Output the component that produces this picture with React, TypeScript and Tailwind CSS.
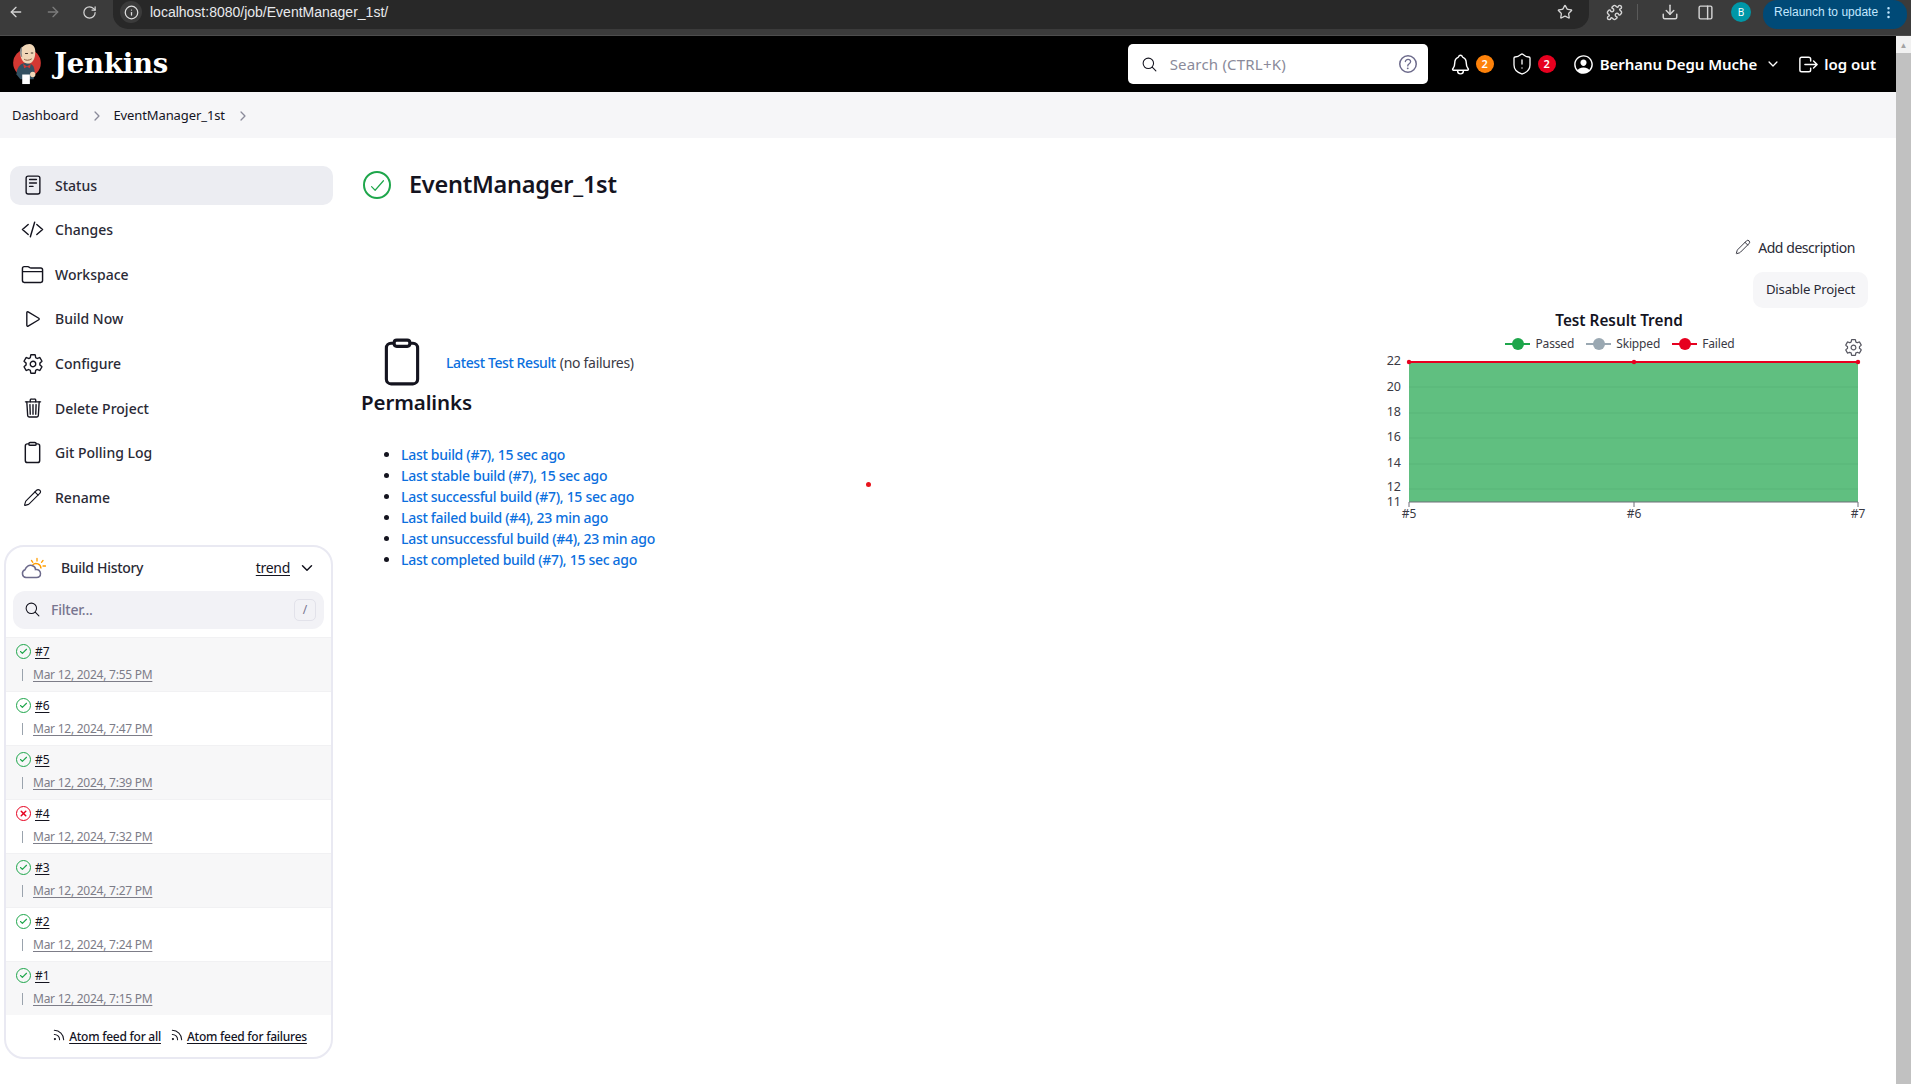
import React from "react";
import { ArrowLeft, ArrowRight, RotateCw, Info, Star, Puzzle, Download, PanelRight, EllipsisVertical, ShieldAlert, Check, X, Pencil, Rss } from "lucide-react";
import { IoReaderOutline, IoCodeSlashOutline, IoFolderOutline, IoPlayOutline, IoSettingsOutline, IoTrashOutline, IoClipboardOutline, IoSearchOutline, IoHelpCircleOutline, IoNotificationsOutline, IoPersonCircleOutline, IoLogOutOutline, IoChevronForward, IoChevronDown, IoCheckmark } from "react-icons/io5";

const F = "font-['Noto_Sans',sans-serif]";

function Logo() {
  return (
    <svg viewBox="0 0 30 44" className="w-[30px] h-[42px] shrink-0">
      <circle cx="15" cy="21" r="14.500" fill="#d33833" />
      <path d="M4 33c0-7 4-12 10-12s9 3 9 10l-1 7H8z" fill="#335061" />
      <path d="M8 10c0-6 5-9 9.500-9 5 .3 7 5 6 11-.6 6-3.500 10-8.500 9.500C10 21 8 15 8 10z" fill="#f0d6b7" />
      <path d="M8 12c-1-3-.5-6 1.500-8 .5 2 .5 4 0 6l.5 5c-1 0-1.700-1.500-2-3z" fill="#8c8c8c" />
      <path d="M11 22l4 2.500 4-2.500-1 4.500-3-1.500-3 1.500z" fill="#d33833" />
      <path d="M10 33h8v10h-8z" fill="#fff" />
      <circle cx="21" cy="33" r="2.800" fill="#f0d6b7" />
      <path d="M13 11h3M19 10.500h2.500" stroke="#3a2a20" strokeWidth="1" />
      <path d="M12 17c2 1.500 5 1.500 8-.5" stroke="#7a4a30" strokeWidth=".9" fill="none" />
    </svg>
  );
}

function Weather() {
  return (
    <svg viewBox="0 0 26 22" fill="none" className="w-[26px] h-[22px]">
      <g stroke="#ff9d00" strokeWidth="1.300" strokeLinecap="round">
        <path d="M17 1.500v2.500M23 3.500l-1.500 1.800M25.500 9h-2.500M11.500 3.500l1.300 1.800" />
      </g>
      <path d="M12.500 8a5 5 0 0 1 8.500 3.500" stroke="#ff9d00" strokeWidth="1.400" />
      <path d="M6 20.500a4 4 0 0 1-1-7.700C6 9.500 9 7.500 12 8.500c2 .6 3.500 2.500 3.500 4 2.800-.5 5 1.300 5 4 0 2.300-1.500 4-4 4z" stroke="#6d6b8c" strokeWidth="1.500" fill="#fff" />
    </svg>
  );
}

const nav: [string, React.ReactNode][] = [
  ["Status", <IoReaderOutline className="w-[22px] h-[22px]" />],
  ["Changes", <IoCodeSlashOutline className="w-[23px] h-[23px]" />],
  ["Workspace", <IoFolderOutline className="w-[23px] h-[23px]" />],
  ["Build Now", <IoPlayOutline className="w-[22px] h-[22px]" />],
  ["Configure", <IoSettingsOutline className="w-[22px] h-[22px]" />],
  ["Delete Project", <IoTrashOutline className="w-[22px] h-[22px]" />],
  ["Git Polling Log", <IoClipboardOutline className="w-[23px] h-[23px]" />],
  ["Rename", <Pencil className="w-[19px] h-[19px]" strokeWidth={1.4} />],
];

const builds = [
  ["#7", "Mar 12, 2024, 7:55 PM", true],
  ["#6", "Mar 12, 2024, 7:47 PM", true],
  ["#5", "Mar 12, 2024, 7:39 PM", true],
  ["#4", "Mar 12, 2024, 7:32 PM", false],
  ["#3", "Mar 12, 2024, 7:27 PM", true],
  ["#2", "Mar 12, 2024, 7:24 PM", true],
  ["#1", "Mar 12, 2024, 7:15 PM", true],
] as const;

const links = [
  "Last build (#7), 15 sec ago",
  "Last stable build (#7), 15 sec ago",
  "Last successful build (#7), 15 sec ago",
  "Last failed build (#4), 23 min ago",
  "Last unsuccessful build (#4), 23 min ago",
  "Last completed build (#7), 15 sec ago",
];

function Legend({ color, label }: { color: string; label: string }) {
  return (
    <span className="flex items-center gap-[5px]">
      <span className="relative w-[25px] h-[2px]" style={{ background: color }}>
        <span className="absolute left-[7px] top-[-5px] w-[12px] h-[12px] rounded-full" style={{ background: color }} />
      </span>
      <span>{label}</span>
    </span>
  );
}

function Chart() {
  const ys: [string, number, number, number][] = [["22", 361, 0, 4], ["20", 387, 1, 4], ["18", 413, 1, 3], ["16", 438, 1, 3], ["14", 464, 1, 3], ["12", 489, 1, 2], ["11", 502, 0, 4]];
  return (
    <svg width="480" height="172" viewBox="1380 352 480 172" className="block overflow-visible -mt-[2px]">
      <rect x="1409" y="362" width="449" height="140" fill="#60bf80" />
      {ys.filter((y) => y[2]).map((y) => <line key={y[0]} x1="1409" x2="1858" y1={y[1]} y2={y[1]} stroke="#58b578" strokeWidth="1" />)}
      <line x1="1409" x2="1858" y1="502" y2="502" stroke="#6e6e78" strokeWidth="1.200" />
      {[1409, 1634, 1858].map((x) => <line key={x} x1={x} x2={x} y1="502" y2="507" stroke="#6e6e78" />)}
      <line x1="1409" x2="1858" y1="362" y2="362" stroke="#e6001f" strokeWidth="2" />
      {[1409, 1634, 1858].map((x) => <circle key={x} cx={x} cy="362" r="2.200" fill="#e6001f" />)}
      {ys.map((y) => <text key={y[0]} x="1401" y={y[1] + y[3]} fontSize="12.500" textAnchor="end" fill="#3a3a44" fontFamily="Noto Sans">{y[0]}</text>)}
      {[["#5", 1409], ["#6", 1634], ["#7", 1858]].map(([t, x]) => <text key={t as string} x={x as number} y="518" fontSize="12" textAnchor="middle" fill="#3a3a44" fontFamily="Noto Sans">{t}</text>)}
    </svg>
  );
}

export default function App() {
  return (
    <div className={`${F} h-screen w-full overflow-hidden flex flex-col bg-white text-[#14141f]`}>
      {/* browser toolbar */}
      <div className="h-[36px] shrink-0 bg-[#3b3b3b] border-b border-[#4d4d4d] flex items-start text-[#c8c8c8]">
        <div className="h-[24px] flex items-center pl-[8px] gap-[21px] w-[113px] shrink-0">
          <ArrowLeft className="w-[16px] h-[16px] text-[#d4d4d4]" />
          <ArrowRight className="w-[16px] h-[16px] text-[#7c7c7c]" />
          <RotateCw className="w-[15px] h-[15px] text-[#d4d4d4]" />
        </div>
        <div className="w-[1476px] h-[29px] bg-[#282828] rounded-b-[15px] flex items-center shrink-0 pl-[7px] pb-[5px]">
          <span className="w-[22px] h-[22px] rounded-full bg-[#3b3b3b] flex items-center justify-center">
            <Info className="w-[15px] h-[15px] text-[#e0e0e0]" />
          </span>
          <span className="ml-[8px] text-[14px] text-[#e8eaed] font-['Liberation_Sans',sans-serif]">localhost:8080/job/EventManager_1st/</span>
          <Star className="ml-auto mr-[16px] w-[16px] h-[16px] text-[#d4d4d4]" />
        </div>
        <div className="flex items-center h-[24px] flex-1 pl-[17px]">
          <Puzzle className="w-[17px] h-[17px] text-[#d4d4d4]" />
          <span className="ml-[14px] w-px h-[16px] bg-[#5a5a5a]" />
          <Download className="ml-[23px] w-[18px] h-[18px] text-[#d4d4d4]" />
          <PanelRight className="ml-[18px] w-[17px] h-[17px] text-[#d4d4d4]" />
          <span className="ml-[17px] w-[20px] h-[20px] rounded-full bg-[#0097a7] text-white text-[10px] flex items-center justify-center">B</span>
          <div className="ml-[12px] w-[144px] h-[29px] shrink-0 self-start bg-[#004a77] rounded-[14px] flex items-center pl-[11px] pb-[5px] text-[12px] text-[#c2e7ff] font-['Liberation_Sans',sans-serif]">
            Relaunch to update
            <EllipsisVertical className="w-[15px] h-[15px] ml-[3px]" />
          </div>
        </div>
      </div>

      <div className="flex-1 flex min-h-0">
        <div className="flex-1 min-w-0 flex flex-col">
          {/* Jenkins header */}
          <header className="h-[56px] shrink-0 bg-black text-white flex items-center pl-[12px]">
            <Logo />
            <span className="ml-[12px] font-['DejaVu_Serif',serif] font-bold text-[27.500px] tracking-[-0.2px] -mt-[1px]">Jenkins</span>
            <div className="ml-auto w-[300px] h-[40px] bg-white rounded-[5px] flex items-center pl-[13px] pr-[8px] text-[#14141f]">
              <IoSearchOutline className="w-[17px] h-[17px]" />
              <span className="ml-[12px] text-[15px] text-[#8a8a9a] tracking-[0.2px]">Search (CTRL+K)</span>
              <IoHelpCircleOutline className="ml-auto w-[24px] h-[24px] text-[#6d6b8c]" />
            </div>
            <IoNotificationsOutline className="ml-[21px] w-[23px] h-[23px]" />
            <span className="ml-[4px] w-[18px] h-[18px] rounded-full bg-[#fe820a] text-[11px] font-semibold flex items-center justify-center">2</span>
            <ShieldAlert className="ml-[16px] w-[24px] h-[24px]" strokeWidth={1.3} />
            <span className="ml-[4px] w-[18px] h-[18px] rounded-full bg-[#e6001f] text-[11px] font-semibold flex items-center justify-center">2</span>
            <IoPersonCircleOutline className="ml-[16px] w-[23px] h-[23px]" />
            <span className="ml-[5px] text-[15px] font-semibold tracking-[-0.05px]">Berhanu Degu Muche</span>
            <IoChevronDown className="ml-[9px] w-[14px] h-[14px]" />
            <IoLogOutOutline className="ml-[17px] w-[23px] h-[23px]" />
            <span className="ml-[4px] mr-[20px] text-[15px] font-semibold">log out</span>
          </header>

          {/* breadcrumb */}
          <div className="h-[46px] shrink-0 bg-[#f6f6f8] flex items-center pl-[12px] pt-[2px] text-[13px] text-[#14141f] tracking-[-0.1px]">
            <span>Dashboard</span>
            <IoChevronForward className="ml-[12px] w-[14px] h-[14px] text-[#8a8a9a]" />
            <span className="ml-[9px]">EventManager_1st</span>
            <IoChevronForward className="ml-[11px] w-[14px] h-[14px] text-[#8a8a9a]" />
          </div>

          <div className="relative flex-1 flex min-h-0">
            <span className="absolute left-[865.500px] top-[343.500px] w-[5px] h-[5px] rounded-full bg-[#e8141c]" />
            {/* side */}
            <aside className="w-[361px] shrink-0 pt-[27.700px] pl-[4px]">
              <nav className="flex flex-col w-[329px] pl-[6px] gap-[5.600px]">
                {nav.map(([label, icon], i) => (
                  <div key={label} className={`h-[39px] rounded-[10px] flex items-center text-[14px] font-medium text-[#2a2a36] ${i === 0 ? "bg-[#ecedf2]" : ""}`}>
                    <span className="w-[45px] flex items-center justify-center shrink-0 text-[#14141f]">{icon}</span>
                    <span>{label}</span>
                  </div>
                ))}
              </nav>
              <section className="mt-[28px] w-[329px] h-[514px] border-2 border-[#e9e9f2] rounded-[20px] flex flex-col overflow-hidden">
                <div className="h-[44px] shrink-0 flex items-center pl-[14px] pr-[16px] pb-[2px] text-[14px] font-medium">
                  <Weather />
                  <span className="ml-[15px] text-[#2a2a36] tracking-[-0.3px]">Build History</span>
                  <span className="ml-auto underline underline-offset-2 font-normal tracking-[-0.3px]">trend</span>
                  <IoChevronDown className="ml-[9px] w-[16px] h-[16px]" />
                </div>
                <div className="mx-[7px] h-[38px] shrink-0 rounded-[12px] bg-[#f2f2f6] flex items-center pl-[11px] pr-[8px]">
                  <IoSearchOutline className="w-[17px] h-[17px]" />
                  <span className="ml-[10px] text-[14px] font-medium text-[#77758f] tracking-[-0.2px]">Filter...</span>
                  <span className="ml-auto w-[22px] h-[22px] rounded-[5px] border border-[#e2e2ea] text-[#77758f] text-[12px] flex items-center justify-center">/</span>
                </div>
                <div className="mt-[8px] flex flex-col">
                  {builds.map(([n, d, ok], i) => (
                    <div key={n} className={`h-[54px] flex flex-col border-t border-[#f1f1f3] ${i % 2 === 0 ? "bg-[#f7f7f8]" : "bg-white"}`}>
                      <div className="flex items-center pl-[10px] h-[27px] pt-[1px]">
                        <span className={`w-[15px] h-[15px] rounded-full border-[1.300px] flex items-center justify-center ${ok ? "border-[#1ea64b] text-[#1ea64b]" : "border-[#e6001f] text-[#e6001f]"}`}>
                          {ok ? <Check className="w-[9px] h-[9px]" strokeWidth={3} /> : <X className="w-[9px] h-[9px]" strokeWidth={4} />}
                        </span>
                        <span className="ml-[4px] text-[12px] underline underline-offset-2 tracking-[-0.1px]">{n}</span>
                      </div>
                      <div className="flex items-center pl-[16px] h-[20px]">
                        <span className="w-px h-[12px] bg-[#9aa3ad]" />
                        <span className="ml-[10px] text-[12px] text-[#7d7d88] underline underline-offset-2 tracking-[-0.25px]">{d}</span>
                      </div>
                    </div>
                  ))}
                </div>
                <div className="flex-1 flex items-center justify-center pl-[22px] pt-[2px] gap-[9px] text-[12px] font-medium">
                  <span className="flex items-center gap-[3px]"><Rss className="w-[14px] h-[14px] -mt-[4px]" strokeWidth={1.8} /><span className="underline underline-offset-2 tracking-[-0.25px]">Atom feed for all</span></span>
                  <span className="flex items-center gap-[3px]"><Rss className="w-[14px] h-[14px] -mt-[4px]" strokeWidth={1.8} /><span className="underline underline-offset-2 tracking-[-0.25px]">Atom feed for failures</span></span>
                </div>
              </section>
            </aside>

            {/* main */}
            <main className="flex-1 min-w-0 pr-[28px] pt-[32px] flex flex-col">
              <div className="flex items-center h-[30px] pl-[2px]">
                <span className="w-[28px] h-[28px] rounded-full border-2 border-[#1ea64b] flex items-center justify-center text-[#1ea64b]">
                  <IoCheckmark className="w-[19px] h-[19px]" />
                </span>
                <h1 className="ml-[18px] text-[23.500px] font-semibold tracking-[-0.25px]">EventManager_1st</h1>
              </div>
              <div className="flex justify-between">
                <div className="pt-[139px] tracking-[-0.3px]">
                  <div className="flex items-center pl-[16px] h-[46px]">
                    <IoClipboardOutline className="w-[50px] h-[50px] text-[#14141f] shrink-0" />
                    <span className="ml-[19px] text-[14px] text-[#0b6fde] font-medium tracking-[-0.4px]">Latest Test Result</span>
                    <span className="ml-[4px] text-[14px] text-[#3a3a44]">(no failures)</span>
                  </div>
                  <h2 className="text-[20.500px] font-semibold leading-[30px] mt-[2px] tracking-[-0.1px]">Permalinks</h2>
                  <ul className="mt-[27px] list-disc pl-[40px] text-[14px] font-medium text-[#0b6fde] marker:text-[#14141f]">
                    {links.map((l) => <li key={l} className="h-[21px] leading-[21px]">{l}</li>)}
                  </ul>
                </div>
                <div className="flex flex-col items-end">
                  <div className="mt-[35px] flex items-center text-[14px] text-[#2a2a36] pr-[13px] h-[24px] tracking-[-0.45px]">
                    <Pencil className="w-[16px] h-[16px]" strokeWidth={1.4} />
                    <span className="ml-[7px]">Add description</span>
                  </div>
                  <div className="mt-[13px] w-[115px] h-[36px] rounded-[10px] bg-[#f6f6f8] flex items-center justify-center text-[13.200px] text-[#2a2a36] tracking-[-0.2px]">Disable Project</div>
                  <div className="w-[480px] mr-[8px]">
                    <div className="text-center font-semibold text-[15.300px] leading-[24px] pr-[2px]">Test Result Trend</div>
                    <div className="relative mt-[2px] flex justify-center gap-[12px] text-[12px] text-[#3a3a44] h-[20px] items-center tracking-[-0.15px]">
                      <Legend color="#1ea64b" label="Passed" />
                      <Legend color="#9aa8b2" label="Skipped" />
                      <Legend color="#e6001f" label="Failed" />
                      <IoSettingsOutline className="absolute right-[-3px] top-[4px] w-[19px] h-[19px] text-[#55555f]" />
                    </div>
                    <Chart />
                  </div>
                </div>
              </div>
            </main>
          </div>
        </div>
        {/* scrollbar */}
        <div className="w-[15px] shrink-0 bg-[#f1f1f1] flex flex-col items-center">
          <span className="h-[17px] text-[8px] leading-[17px] text-[#a3a3a3]">▲</span>
          <span className="w-full flex-1 bg-[#c1c1c1]" />
        </div>
      </div>
    </div>
  );
}
